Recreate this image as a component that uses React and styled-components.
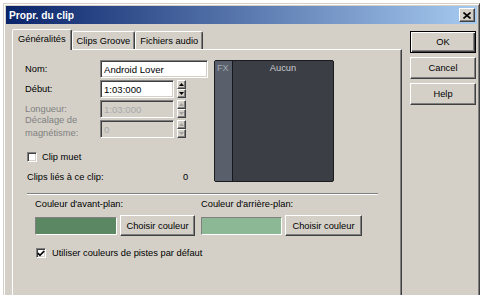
import React from 'react';
import styled, { createGlobalStyle, css } from 'styled-components';

const Global = createGlobalStyle`
  html, body { margin: 0; padding: 0; background: #ffffff; }
  body {
    font-family: "Liberation Sans", Arial, sans-serif;
    font-size: 9.3px;
    color: #000;
  }
  #root { width: 482px; height: 295px; overflow: hidden; }
  * { box-sizing: border-box; }
`;

const raised = css`
  border-style: solid;
  border-width: 1px;
  border-color: #ffffff #404040 #404040 #ffffff;
  box-shadow: inset -1px -1px 0 #808080;
`;

const sunken = css`
  border-style: solid;
  border-width: 1px;
  border-color: #808080 #ffffff #ffffff #808080;
  box-shadow: inset 1px 1px 0 #404040, inset -1px -1px 0 #d4d0c8;
`;

const Screen = styled.div`
  width: 482px;
  height: 295px;
  padding: 3px 0 0 3px;
  overflow: hidden;
`;

const Window = styled.div`
  width: 477px;
  height: 310px;
  background: #d4d0c8;
  border-style: solid;
  border-width: 1px;
  border-color: #d4d0c8 #404040 #404040 #d4d0c8;
  box-shadow: inset 1px 1px 0 #ffffff, inset -1px -1px 0 #808080;
  padding: 2px;
  display: flex;
  flex-direction: column;
`;

const TitleBar = styled.div`
  height: 18px;
  flex: none;
  background: linear-gradient(to right, #0a246a, #a6caf0);
  display: flex;
  align-items: center;
  justify-content: space-between;
  padding: 0 2px 0 3px;
`;

const Title = styled.span`
  color: #fff;
  font-weight: bold;
  font-size: 10.2px;
`;

const CloseBtn = styled.div`
  width: 16px;
  height: 14px;
  background: #d4d0c8;
  ${raised};
  display: flex;
  align-items: center;
  justify-content: center;
`;

const Body = styled.div`
  flex: 1;
  display: flex;
  padding: 5px 0 0 6px;
  gap: 8px;
`;

const TabArea = styled.div`
  width: 390px;
  display: flex;
  flex-direction: column;
`;

const TabStrip = styled.div`
  height: 20px;
  display: flex;
  align-items: flex-end;
  position: relative;
  z-index: 1;
`;

const Tab = styled.div`
  height: ${(p) => (p.$active ? 21 : 18)}px;
  margin-bottom: ${(p) => (p.$active ? -1 : 0)}px;
  padding: 0 ${(p) => (p.$active ? 5 : 4)}px ${(p) => (p.$active ? 2 : 0)}px;
  display: flex;
  align-items: center;
  background: #d4d0c8;
  border-style: solid;
  border-width: 1px 1px 0 1px;
  border-color: #ffffff #404040 transparent #ffffff;
  border-radius: 2px 2px 0 0;
  box-shadow: inset -1px 0 0 #808080;
  white-space: nowrap;
`;

const Pane = styled.div`
  flex: 1;
  border-style: solid;
  border-width: 1px 1px 0 1px;
  border-color: #ffffff #404040 transparent #ffffff;
  box-shadow: inset -1px 0 0 #808080;
  padding: 10px 12px 0 12px;
  display: flex;
  flex-direction: column;
`;

const TopSection = styled.div`
  display: flex;
  gap: 6px;
`;

const FormCol = styled.div`
  width: 183px;
  display: flex;
  flex-direction: column;
`;

const FieldRow = styled.div`
  height: 18px;
  margin-bottom: 2px;
  display: flex;
  align-items: center;
`;

const Label = styled.div`
  width: 75px;
  flex: none;
  color: ${(p) => (p.$disabled ? '#808080' : '#000')};
  ${(p) =>
    p.$multi &&
    css`
      align-self: flex-end;
      line-height: 12.5px;
      margin-bottom: -1px;
    `}
`;

const Input = styled.div`
  width: ${(p) => p.$w}px;
  height: 18px;
  ${sunken};
  background: ${(p) => (p.$disabled ? '#d4d0c8' : '#ffffff')};
  color: ${(p) => (p.$disabled ? '#a8a8a8' : '#000')};
  padding: 0 3px;
  display: flex;
  align-items: center;
  font-size: 9.6px;
  white-space: nowrap;
`;

const Spinner = styled.div`
  width: 9px;
  height: 18px;
  margin-left: 3px;
  display: flex;
  flex-direction: column;
`;

const SpinBtn = styled.div`
  flex: 1;
  background: #d4d0c8;
  ${raised};
  display: flex;
  align-items: center;
  justify-content: center;
`;

const CheckRow = styled.div`
  display: flex;
  align-items: center;
  gap: ${(p) => p.$gap || 5}px;
  margin-left: ${(p) => p.$ml || 0}px;
  margin-top: ${(p) => p.$mt || 0}px;
  height: 12px;
`;

const Box = styled.div`
  width: 10px;
  height: 10px;
  background: #fff;
  ${sunken};
  display: flex;
  align-items: center;
  justify-content: center;
  flex: none;
`;

const InfoRow = styled.div`
  display: flex;
  margin-left: 2px;
  margin-top: 8px;
  height: 12px;
  align-items: center;
`;

const InfoLabel = styled.div`
  width: 156px;
`;

const FxPanel = styled.div`
  width: 120px;
  height: 122px;
  background: #3c3e45;
  border: 1px solid #1b1c20;
  border-radius: 2px;
  display: flex;
  overflow: hidden;
`;

const FxStrip = styled.div`
  width: 18px;
  background: #5a606b;
  border-right: 1px solid #17181b;
  color: #a3a9b3;
  font-size: 9px;
  padding: 2px 0 0 2px;
`;

const FxMain = styled.div`
  flex: 1;
  color: #c9cbd0;
  text-align: center;
  font-size: 9.3px;
  padding-top: 2px;
`;

const Separator = styled.div`
  margin: 10px 0 0 2px;
  width: 351px;
  height: 2px;
  border-top: 1px solid #808080;
  border-bottom: 1px solid #ffffff;
`;

const ColorSection = styled.div`
  display: flex;
  gap: 6px;
  margin: 3px 0 0 10px;
`;

const ColorGroup = styled.div`
  display: flex;
  flex-direction: column;
`;

const ColorLabel = styled.div`
  height: 12px;
  line-height: 12px;
  margin-bottom: 5px;
`;

const ColorRow = styled.div`
  display: flex;
  align-items: center;
  gap: 3px;
`;

const Swatch = styled.div`
  width: ${(p) => p.$w}px;
  height: 18px;
  background: ${(p) => p.$color};
  border-style: solid;
  border-width: 1px;
  border-color: #808080 #ffffff #ffffff #808080;
`;

const Button = styled.div`
  width: ${(p) => p.$w}px;
  height: ${(p) => p.$h || 21}px;
  background: #d4d0c8;
  ${raised};
  display: flex;
  align-items: center;
  justify-content: center;
  white-space: nowrap;
  ${(p) =>
    p.$default &&
    css`
      border-color: #000;
      box-shadow: inset 1px 1px 0 #ffffff, inset -1px -1px 0 #404040, inset -2px -2px 0 #808080;
    `}
`;

const ButtonCol = styled.div`
  display: flex;
  flex-direction: column;
  gap: 4px;
  padding-top: 2px;
`;

const Tri = ({ up, color }) => (
  <svg width="5" height="3" viewBox="0 0 5 3">
    <path d={up ? 'M0 3 L2.5 0 L5 3 Z' : 'M0 0 L2.5 3 L5 0 Z'} fill={color} />
  </svg>
);

const Spin = ({ disabled }) => (
  <Spinner>
    <SpinBtn>
      <Tri up color={disabled ? '#a0a0a0' : '#000'} />
    </SpinBtn>
    <SpinBtn>
      <Tri color={disabled ? '#a0a0a0' : '#000'} />
    </SpinBtn>
  </Spinner>
);

const Check = () => (
  <svg width="8" height="7" viewBox="0 0 8 7">
    <path d="M0.8 3.2 L3 5.4 L7.2 1" stroke="#000" strokeWidth="1.7" fill="none" />
  </svg>
);

export default function App() {
  return (
    <>
      <Global />
      <Screen>
        <Window>
          <TitleBar>
            <Title>Propr. du clip</Title>
            <CloseBtn>
              <svg width="8" height="7" viewBox="0 0 8 7">
                <path d="M0.5 0.5 L7.5 6.5 M7.5 0.5 L0.5 6.5" stroke="#000" strokeWidth="1.6" />
              </svg>
            </CloseBtn>
          </TitleBar>
          <Body>
            <TabArea>
              <TabStrip>
                <Tab $active>Généralités</Tab>
                <Tab>Clips Groove</Tab>
                <Tab>Fichiers audio</Tab>
              </TabStrip>
              <Pane>
                <TopSection>
                  <FormCol>
                    <FieldRow>
                      <Label>Nom:</Label>
                      <Input $w={108}>Android Lover</Input>
                    </FieldRow>
                    <FieldRow>
                      <Label>Début:</Label>
                      <Input $w={74}>1:03:000</Input>
                      <Spin />
                    </FieldRow>
                    <FieldRow>
                      <Label $disabled>Longueur:</Label>
                      <Input $w={74} $disabled>1:03:000</Input>
                      <Spin disabled />
                    </FieldRow>
                    <FieldRow>
                      <Label $disabled $multi>
                        Décalage de
                        <br />
                        magnétisme:
                      </Label>
                      <Input $w={74} $disabled>0</Input>
                      <Spin disabled />
                    </FieldRow>
                    <CheckRow $ml={2} $mt={11}>
                      <Box />
                      <span>Clip muet</span>
                    </CheckRow>
                    <InfoRow>
                      <InfoLabel>Clips liés à ce clip:</InfoLabel>
                      <span>0</span>
                    </InfoRow>
                  </FormCol>
                  <FxPanel>
                    <FxStrip>FX</FxStrip>
                    <FxMain>Aucun</FxMain>
                  </FxPanel>
                </TopSection>
                <Separator />
                <ColorSection>
                  <ColorGroup>
                    <ColorLabel>Couleur d'avant-plan:</ColorLabel>
                    <ColorRow>
                      <Swatch $w={82} $color="#5b8862" />
                      <Button $w={75}>Choisir couleur</Button>
                    </ColorRow>
                  </ColorGroup>
                  <ColorGroup>
                    <ColorLabel>Couleur d'arrière-plan:</ColorLabel>
                    <ColorRow>
                      <Swatch $w={81} $color="#8db896" />
                      <Button $w={77}>Choisir couleur</Button>
                    </ColorRow>
                  </ColorGroup>
                </ColorSection>
                <CheckRow $ml={11} $mt={11} $gap={6}>
                  <Box>
                    <Check />
                  </Box>
                  <span>Utiliser couleurs de pistes par défaut</span>
                </CheckRow>
              </Pane>
            </TabArea>
            <ButtonCol>
              <Button $w={66} $h={22} $default>OK</Button>
              <Button $w={66} $h={22}>Cancel</Button>
              <Button $w={66} $h={22}>Help</Button>
            </ButtonCol>
          </Body>
        </Window>
      </Screen>
    </>
  );
}
